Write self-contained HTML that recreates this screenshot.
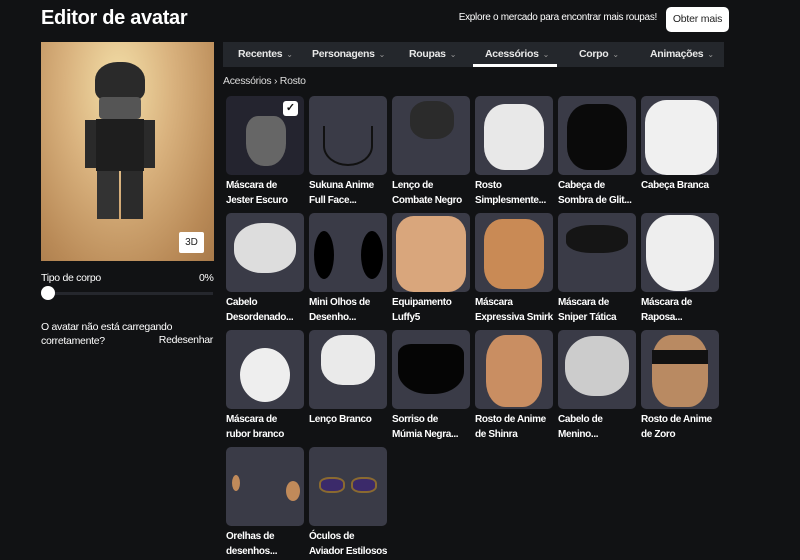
<!DOCTYPE html>
<html><head><meta charset="utf-8"><style>
*{margin:0;padding:0;box-sizing:border-box}
body{width:800px;height:560px;background:#111214;font-family:"Liberation Sans",sans-serif;color:#fff;position:relative;overflow:hidden}
h1{position:absolute;left:41px;top:7px;font-size:20px;font-weight:bold;letter-spacing:-0.3px}
.explore{position:absolute;right:143px;top:12px;font-size:10px;color:#fff;letter-spacing:-0.3px}
.btn{position:absolute;left:666px;top:7px;width:63px;height:25px;background:#fff;border-radius:5px;color:#222;font-size:10.5px;text-align:center;line-height:25px;letter-spacing:-0.2px}
.av{position:absolute;left:41px;top:42px;width:173px;height:219px;background:radial-gradient(ellipse at 45% 20%,#f3dfa8 0%,#d9b27e 40%,#b98a57 80%,#a87a4a 100%)}
.b3d{position:absolute;left:179px;top:232px;width:25px;height:21px;background:#fff;color:#222;font-size:10px;text-align:center;line-height:21px;border-radius:2px}
.lbl{position:absolute;font-size:10.5px;letter-spacing:-0.3px}
.track{position:absolute;left:46px;top:292px;width:167px;height:3px;background:#25272d}
.knob{position:absolute;left:41px;top:286px;width:14px;height:14px;border-radius:50%;background:#fff}
.tabs{position:absolute;left:223px;top:42px;width:501px;height:25px;background:#24272c}
.tab{position:absolute;top:0;font-size:10.5px;font-weight:bold;line-height:25px;color:#e8e8e8;letter-spacing:-0.3px}
.tab span{font-weight:normal;color:#999;font-size:8px;margin-left:4px}
.ul{position:absolute;left:473px;top:64px;width:84px;height:3px;background:#fff}
.crumb{position:absolute;left:223px;top:75px;font-size:10.5px;color:#ddd;letter-spacing:-0.3px}
.t{position:absolute;width:78px;height:79px;background:#3a3b47;border-radius:5px;overflow:hidden}
.n{position:absolute;width:80px;font-size:10px;font-weight:bold;line-height:15px;color:#fff;white-space:nowrap;overflow:hidden;letter-spacing:-0.35px}
.chk{position:absolute;right:6px;top:5px;width:15px;height:15px;background:#fff;border-radius:3px;color:#111;font-size:11px;text-align:center;line-height:15px;font-weight:bold}
</style></head><body>
<h1>Editor de avatar</h1>
<div class="explore">Explore o mercado para encontrar mais roupas!</div>
<div class="btn">Obter mais</div>
<div class="av">
<div style="position:absolute;left:54px;top:20px;width:50px;height:40px;background:#2a2a2a;border-radius:45% 45% 30% 30%"></div>
<div style="position:absolute;left:58px;top:55px;width:42px;height:22px;background:#555;border-radius:4px"></div>
<div style="position:absolute;left:55px;top:77px;width:48px;height:52px;background:#1e1e1e"></div>
<div style="position:absolute;left:44px;top:78px;width:11px;height:48px;background:#2a2a2a"></div>
<div style="position:absolute;left:103px;top:78px;width:11px;height:48px;background:#2a2a2a"></div>
<div style="position:absolute;left:56px;top:129px;width:22px;height:48px;background:#333"></div>
<div style="position:absolute;left:80px;top:129px;width:22px;height:48px;background:#2b2b2b"></div>
</div>
<div class="b3d">3D</div>
<div class="lbl" style="left:41px;top:272px">Tipo de corpo</div>
<div class="lbl" style="left:199px;top:272px">0%</div>
<div class="track"></div><div class="knob"></div>
<div class="lbl" style="left:41px;top:320px;line-height:14px">O avatar não está carregando<br>corretamente?</div>
<div class="lbl" style="right:587px;top:334px">Redesenhar</div>
<div class="tabs">
<div class="tab" style="left:15px">Recentes<span>⌄</span></div>
<div class="tab" style="left:89px">Personagens<span>⌄</span></div>
<div class="tab" style="left:186px">Roupas<span>⌄</span></div>
<div class="tab" style="left:262px">Acessórios<span>⌄</span></div>
<div class="tab" style="left:356px">Corpo<span>⌄</span></div>
<div class="tab" style="left:427px">Animações<span>⌄</span></div>
</div>
<div class="ul"></div>
<div class="crumb">Acessórios › Rosto</div>

<div class="t" style="left:226px;top:96px;background:#24242f"><div style="position:absolute;left:20px;top:20px;width:40px;height:50px;background:#666;border-radius:30% 30% 45% 45%"></div><div class="chk">✓</div></div>
<div class="t" style="left:309px;top:96px"><div style="position:absolute;left:14px;top:30px;width:50px;height:40px;border:2px solid #111;border-top:none;border-radius:0 0 50% 50%"></div></div>
<div class="t" style="left:392px;top:96px"><div style="position:absolute;left:18px;top:5px;width:44px;height:38px;background:#2b2b2b;border-radius:40%"></div></div>
<div class="t" style="left:475px;top:96px"><div style="position:absolute;left:9px;top:8px;width:60px;height:66px;background:#e8e8e8;border-radius:35%"></div></div>
<div class="t" style="left:558px;top:96px"><div style="position:absolute;left:9px;top:8px;width:60px;height:66px;background:#0a0a0a;border-radius:35%"></div></div>
<div class="t" style="left:641px;top:96px"><div style="position:absolute;left:4px;top:4px;width:72px;height:75px;background:#f0f0f0;border-radius:30%"></div></div>
<div class="n" style="left:226px;top:178px">Máscara de<br>Jester Escuro</div>
<div class="n" style="left:309px;top:178px">Sukuna Anime<br>Full Face...</div>
<div class="n" style="left:392px;top:178px">Lenço de<br>Combate Negro</div>
<div class="n" style="left:475px;top:178px">Rosto<br>Simplesmente...</div>
<div class="n" style="left:558px;top:178px">Cabeça de<br>Sombra de Glit...</div>
<div class="n" style="left:641px;top:178px">Cabeça Branca</div>

<div class="t" style="left:226px;top:213px"><div style="position:absolute;left:8px;top:10px;width:62px;height:50px;background:#ddd;border-radius:45%"></div></div>
<div class="t" style="left:309px;top:213px"><div style="position:absolute;left:5px;top:18px;width:20px;height:48px;background:#000;border-radius:50%"></div><div style="position:absolute;left:52px;top:18px;width:22px;height:48px;background:#000;border-radius:50%"></div></div>
<div class="t" style="left:392px;top:213px"><div style="position:absolute;left:4px;top:3px;width:70px;height:76px;background:#d9a67c;border-radius:25%"></div></div>
<div class="t" style="left:475px;top:213px"><div style="position:absolute;left:9px;top:6px;width:60px;height:70px;background:#c98a55;border-radius:30%"></div></div>
<div class="t" style="left:558px;top:213px"><div style="position:absolute;left:8px;top:12px;width:62px;height:28px;background:#151515;border-radius:40%"></div></div>
<div class="t" style="left:641px;top:213px"><div style="position:absolute;left:5px;top:2px;width:68px;height:76px;background:#eee;border-radius:35% 35% 45% 45%"></div></div>
<div class="n" style="left:226px;top:295px">Cabelo<br>Desordenado...</div>
<div class="n" style="left:309px;top:295px">Mini Olhos de<br>Desenho...</div>
<div class="n" style="left:392px;top:295px">Equipamento<br>Luffy5</div>
<div class="n" style="left:475px;top:295px">Máscara<br>Expressiva Smirk</div>
<div class="n" style="left:558px;top:295px">Máscara de<br>Sniper Tática</div>
<div class="n" style="left:641px;top:295px">Máscara de<br>Raposa...</div>

<div class="t" style="left:226px;top:330px"><div style="position:absolute;left:14px;top:18px;width:50px;height:54px;background:#eee;border-radius:50%"></div></div>
<div class="t" style="left:309px;top:330px"><div style="position:absolute;left:12px;top:5px;width:54px;height:50px;background:#eaeaea;border-radius:40%"></div></div>
<div class="t" style="left:392px;top:330px"><div style="position:absolute;left:6px;top:14px;width:66px;height:50px;background:#050505;border-radius:20% 20% 45% 45%"></div></div>
<div class="t" style="left:475px;top:330px"><div style="position:absolute;left:11px;top:5px;width:56px;height:72px;background:#c98e62;border-radius:35%"></div></div>
<div class="t" style="left:558px;top:330px"><div style="position:absolute;left:7px;top:6px;width:64px;height:60px;background:#ccc;border-radius:45%"></div></div>
<div class="t" style="left:641px;top:330px"><div style="position:absolute;left:11px;top:5px;width:56px;height:72px;background:#b98a62;border-radius:35%"></div><div style="position:absolute;left:11px;top:20px;width:56px;height:14px;background:#111"></div></div>
<div class="n" style="left:226px;top:412px">Máscara de<br>rubor branco</div>
<div class="n" style="left:309px;top:412px">Lenço Branco</div>
<div class="n" style="left:392px;top:412px">Sorriso de<br>Múmia Negra...</div>
<div class="n" style="left:475px;top:412px">Rosto de Anime<br>de Shinra</div>
<div class="n" style="left:558px;top:412px">Cabelo de<br>Menino...</div>
<div class="n" style="left:641px;top:412px">Rosto de Anime<br>de Zoro</div>

<div class="t" style="left:226px;top:447px"><div style="position:absolute;left:6px;top:28px;width:8px;height:16px;background:#c08a5a;border-radius:50%"></div><div style="position:absolute;left:60px;top:34px;width:14px;height:20px;background:#c08a5a;border-radius:50%"></div></div>
<div class="t" style="left:309px;top:447px"><div style="position:absolute;left:10px;top:30px;width:26px;height:16px;background:#3b2a6a;border:2px solid #8a6a30;border-radius:40%"></div><div style="position:absolute;left:42px;top:30px;width:26px;height:16px;background:#3b2a6a;border:2px solid #8a6a30;border-radius:40%"></div></div>
<div class="n" style="left:226px;top:529px">Orelhas de<br>desenhos...</div>
<div class="n" style="left:309px;top:529px">Óculos de<br>Aviador Estilosos</div>
</body></html>
